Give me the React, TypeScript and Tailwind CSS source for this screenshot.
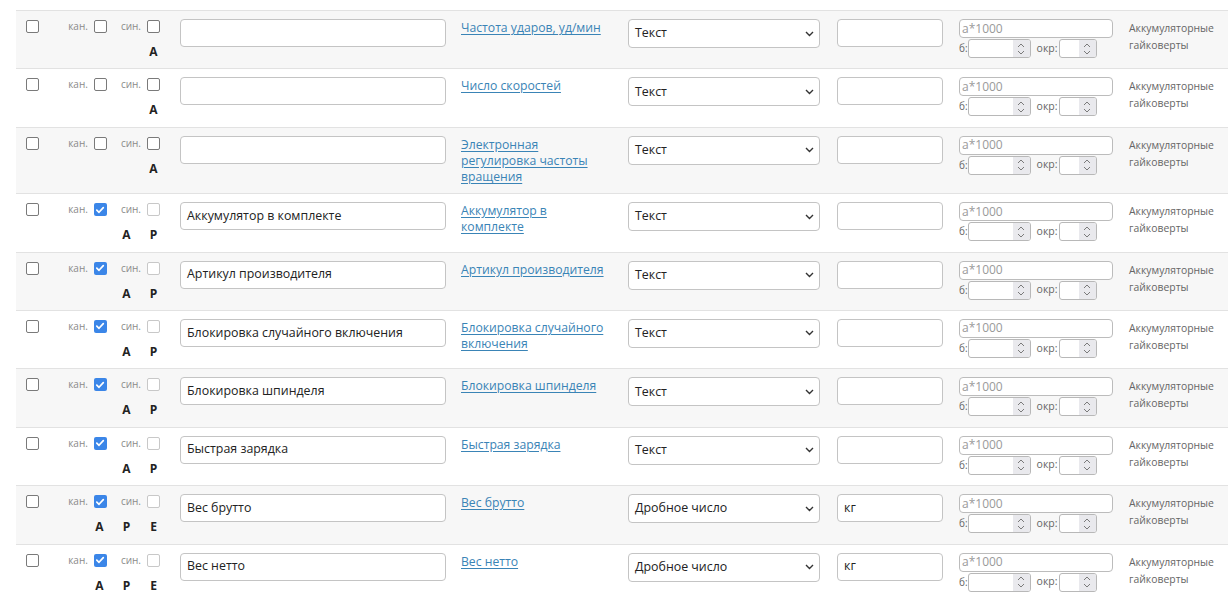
import React from "react";

type Row = {
  name: string;
  link: string;
  type: string;
  unit: string;
  kan: boolean;
  sinDisabled: boolean;
  letters: string[];
};

const base = (o: Partial<Row>): Row => ({
  name: "",
  link: "",
  type: "Текст",
  unit: "",
  kan: false,
  sinDisabled: false,
  letters: ["A"],
  ...o,
});

const rows: Row[] = [
  base({ link: "Частота ударов, уд/мин" }),
  base({ link: "Число скоростей" }),
  base({ link: "Электронная регулировка частоты вращения" }),
  base({ name: "Аккумулятор в комплекте", link: "Аккумулятор в комплекте", kan: true, sinDisabled: true, letters: ["A", "P"] }),
  base({ name: "Артикул производителя", link: "Артикул производителя", kan: true, sinDisabled: true, letters: ["A", "P"] }),
  base({ name: "Блокировка случайного включения", link: "Блокировка случайного включения", kan: true, sinDisabled: true, letters: ["A", "P"] }),
  base({ name: "Блокировка шпинделя", link: "Блокировка шпинделя", kan: true, sinDisabled: true, letters: ["A", "P"] }),
  base({ name: "Быстрая зарядка", link: "Быстрая зарядка", kan: true, sinDisabled: true, letters: ["A", "P"] }),
  base({ name: "Вес брутто", link: "Вес брутто", type: "Дробное число", unit: "кг", kan: true, sinDisabled: true, letters: ["A", "P", "E"] }),
  base({ name: "Вес нетто", link: "Вес нетто", type: "Дробное число", unit: "кг", kan: true, sinDisabled: true, letters: ["A", "P", "E"] }),
];

function Check({ checked, disabled }: { checked?: boolean; disabled?: boolean }) {
  if (checked) {
    return (
      <span className="flex h-[13px] w-[13px] shrink-0 items-center justify-center rounded-[2px] bg-[#3b86e8]">
        <svg width="10" height="10" viewBox="0 0 10 10">
          <path d="M1.8 5.2 L4 7.3 L8.3 2.6" fill="none" stroke="white" strokeWidth="1.7" strokeLinecap="round" strokeLinejoin="round" />
        </svg>
      </span>
    );
  }
  return (
    <span
      className={
        disabled
          ? "block h-[13px] w-[13px] shrink-0 rounded-[2px] border border-[#c8c8c8] bg-white"
          : "block h-[13px] w-[13px] shrink-0 rounded-[2px] border border-[#7a7a7a] bg-white"
      }
    />
  );
}

function Spin({ width }: { width: string }) {
  return (
    <div className={`flex h-[19px] ${width} rounded-[3px] border border-[#b8b8b8] bg-white`}>
      <div className="flex-1" />
      <div className="flex w-[17px] flex-col items-center justify-center rounded-r-[2px] bg-[#e9e9ed]">
        <svg width="8" height="14" viewBox="0 0 8 14">
          <path d="M1 5 L4 2 L7 5" fill="none" stroke="#7a7a7a" strokeWidth="1" />
          <path d="M1 9 L4 12 L7 9" fill="none" stroke="#7a7a7a" strokeWidth="1" />
        </svg>
      </div>
    </div>
  );
}

function TableRow({ r, odd }: { r: Row; odd: boolean }) {
  return (
    <div className={`flex border-t border-[#e2e2e2] pt-[8px] pb-[8.4px] ${odd ? "bg-[#f7f7f7]" : "bg-white"}`}>
      <div className="w-[44px] shrink-0 pl-[10px] pt-[1px]">
        <Check />
      </div>
      <div className="flex w-[111px] shrink-0 flex-col items-end pr-[11px]">
        <div className="flex h-[14px] items-center pt-[1px]">
          <span className="mr-[6px] text-[10px] text-[#8a8a8a]">кан.</span>
          <Check checked={r.kan} />
          <span className="ml-[14px] mr-[6px] text-[10px] text-[#8a8a8a]">син.</span>
          <Check disabled={r.sinDisabled} />
        </div>
        <div className="mt-[11px] flex h-[16px] gap-[14px]">
          {r.letters.map((l) => (
            <span key={l} className="w-[13px] text-center text-[12px] font-bold leading-[16px] text-[#222]">
              {l}
            </span>
          ))}
        </div>
      </div>
      <div className="w-[282px] shrink-0 pl-[9px]">
        <div className="flex h-[28px] w-[266px] items-center rounded-[4px] border border-[#c4c4c4] bg-white px-[6px] text-[12.4px] text-[#222]">
          {r.name}
        </div>
      </div>
      <div className="w-[167px] shrink-0 pl-[8px]">
        <a href="#" className="block max-w-[150px] pt-[1px] text-[12.2px] leading-[16px] text-[#3a84b6] underline underline-offset-[2px]">
          {r.link}
        </a>
      </div>
      <div className="w-[209px] shrink-0 pl-[8px]">
        <div className="flex h-[29px] w-[192px] items-center justify-between rounded-[4px] border border-[#c4c4c4] bg-white pl-[6px] pr-[5px] text-[12.4px] text-[#222]">
          <span>{r.type}</span>
          <svg width="9" height="6" viewBox="0 0 9 6">
            <path d="M1 1 L4.5 4.5 L8 1" fill="none" stroke="#333" strokeWidth="1.4" />
          </svg>
        </div>
      </div>
      <div className="w-[122px] shrink-0 pl-[8px]">
        <div className="flex h-[28px] w-[106px] items-center rounded-[4px] border border-[#c4c4c4] bg-white px-[6px] text-[12.4px] text-[#222]">
          {r.unit}
        </div>
      </div>
      <div className="w-[170px] shrink-0 pl-[8px]">
        <div className="flex h-[19px] w-[154px] items-center rounded-[4px] border border-[#bcbcbc] bg-white px-[2px] text-[12px] text-[#9a9a9a]">
          a*1000
        </div>
        <div className="mt-[1px] flex items-center">
          <span className="text-[10px] text-[#666]">б:</span>
          <Spin width="w-[63px]" />
          <span className="ml-[6px] mr-[1px] text-[10.5px] text-[#666]">окр:</span>
          <Spin width="w-[38px]" />
        </div>
      </div>
      <div className="flex-1 pl-[8px] pt-[1px] text-[10.4px] leading-[17px] text-[#666]">
        Аккумуляторные
        <br />
        гайковерты
      </div>
    </div>
  );
}

export default function App() {
  return (
    <div className="h-[593px] w-[1228px] overflow-hidden bg-white" style={{ fontFamily: '"Open Sans", "Noto Sans", sans-serif' }}>
      <div className="ml-[16px] mt-[10px]">
        {rows.map((r, i) => (
          <TableRow key={i} r={r} odd={i % 2 === 0} />
        ))}
      </div>
    </div>
  );
}
